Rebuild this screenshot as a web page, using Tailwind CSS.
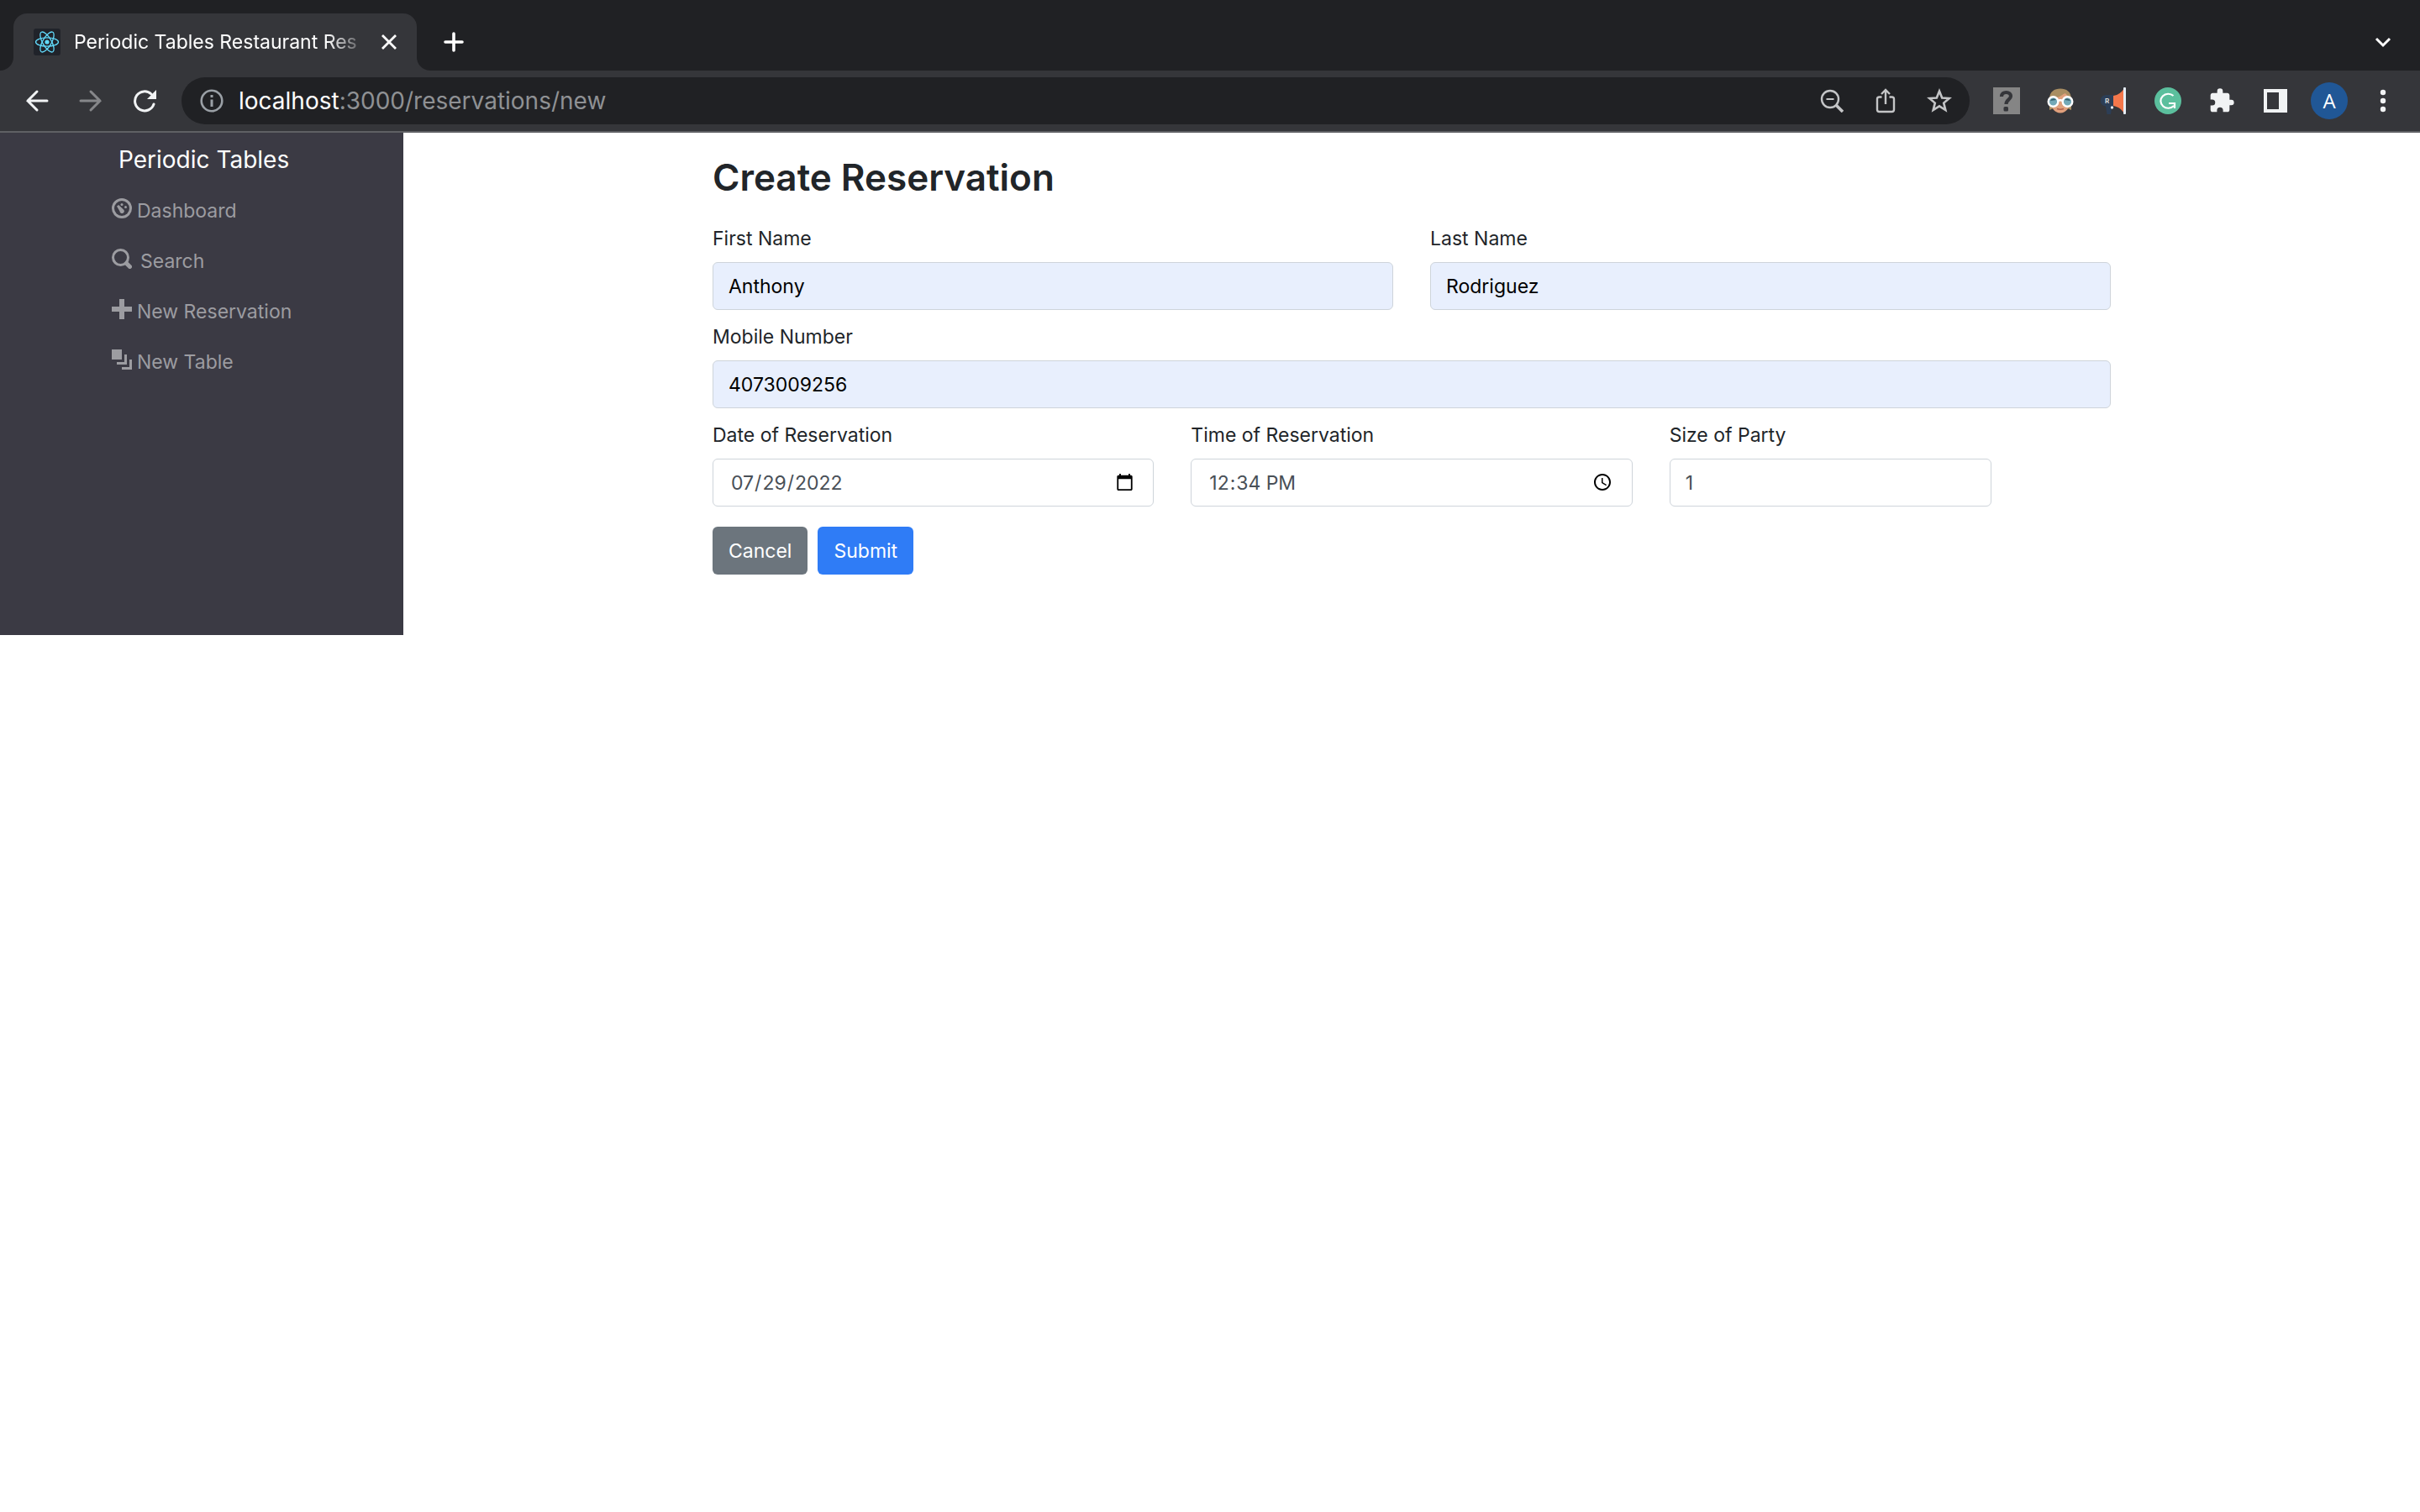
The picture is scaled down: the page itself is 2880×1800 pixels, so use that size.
<!DOCTYPE html>
<html lang="en-US">
<head>
<meta charset="utf-8">
<title>Periodic Tables Restaurant Reservations</title>
<script src="https://cdn.jsdelivr.net/npm/@tailwindcss/browser@4"></script>
</head>
<body class="min-h-screen bg-white font-['Inter',sans-serif] text-[23px] leading-9 text-[#212529]">
<header class="border-b-2 border-[#5f6064] bg-[#35363a]">
  <div class="flex h-[84px] items-end bg-[#202124]">
    <svg class="size-4 shrink-0 text-[#35363a]" viewBox="0 0 16 16" fill="currentColor"><path d="M16 0V16H0A16 16 0 0 0 16 0Z"/></svg>
    <div class="flex h-[68px] w-[480px] items-center rounded-t-2xl bg-[#35363a] pl-6 pr-5">
      <svg class="size-8 shrink-0" viewBox="0 0 32 32"><rect width="32" height="32" rx="3" fill="#20232a"/><g fill="none" stroke="#61dafb" stroke-width="1.3"><ellipse cx="16" cy="16" rx="13.5" ry="5.2"/><ellipse cx="16" cy="16" rx="13.5" ry="5.2" transform="rotate(60 16 16)"/><ellipse cx="16" cy="16" rx="13.5" ry="5.2" transform="rotate(120 16 16)"/></g><circle cx="16" cy="16" r="2.6" fill="#61dafb"/></svg>
      <span class="ml-4 w-[350px] shrink-0 overflow-hidden whitespace-nowrap text-white [mask-image:linear-gradient(to_right,black_86%,transparent)]">Periodic Tables Restaurant Res</span>
      <button class="ml-3 flex size-8 items-center justify-center text-white" aria-label="Close tab"><svg class="size-5" viewBox="0 0 20 20" fill="none" stroke="currentColor" stroke-width="2.8"><path d="M2 2L18 18M18 2L2 18"/></svg></button>
    </div>
    <svg class="size-4 shrink-0 text-[#35363a]" viewBox="0 0 16 16" fill="currentColor"><path d="M0 0V16H16A16 16 0 0 1 0 0Z"/></svg>
    <button class="ml-1 flex h-[68px] w-12 items-center justify-center text-white" aria-label="New tab"><svg class="size-6" viewBox="0 0 24 24" fill="none" stroke="currentColor" stroke-width="3.6" stroke-linecap="round"><path d="M12 2V22M2 12H22"/></svg></button>
    <button class="ml-auto mr-3 flex h-[68px] w-16 items-center justify-center text-white" aria-label="Search tabs"><svg class="size-6" viewBox="0 0 24 24" fill="none" stroke="currentColor" stroke-width="3"><path d="M4 8L12 16L20 8"/></svg></button>
  </div>
  <div class="flex h-[72px] items-center px-3">
    <button class="flex w-16 justify-center text-[#f1f3f4]" aria-label="Back"><svg class="size-7" viewBox="0 0 28 28" fill="none" stroke="currentColor" stroke-width="3" stroke-linecap="round"><path d="M26 14H3M14 3L3 14L14 25"/></svg></button>
    <button class="flex w-16 justify-center text-[#86878a]" aria-label="Forward"><svg class="size-7" viewBox="0 0 28 28" fill="none" stroke="currentColor" stroke-width="3" stroke-linecap="round"><path d="M2 14H25M14 3L25 14L14 25"/></svg></button>
    <button class="flex w-16 justify-center text-[#f1f3f4]" aria-label="Reload"><svg class="size-7" viewBox="0 0 28 28"><path d="M25 18A11.5 11.5 0 1 1 22 6" fill="none" stroke="currentColor" stroke-width="3" stroke-linecap="round"/><path d="M28 1V12H17Z" fill="currentColor"/></svg></button>
    <div class="mx-3 flex h-14 flex-1 items-center rounded-full bg-[#202124] pl-[22px]">
      <svg class="size-7 shrink-0" viewBox="0 0 28 28" fill="none" stroke="#9aa0a6" stroke-width="2.6"><circle cx="14" cy="14" r="12.3"/><path d="M14 12.5V21M14 7V10" stroke-width="3"/></svg>
      <div class="ml-[18px] flex-1 text-[28px] text-[#8f9194]"><span class="text-white">localhost</span>:3000/reservations/new</div>
      <button class="flex w-16 justify-center text-[#c4c5c7]" aria-label="Zoom"><svg class="size-7" viewBox="0 0 28 28" fill="none" stroke="currentColor"><circle cx="12" cy="12" r="10" stroke-width="2.4"/><path d="M7.5 12H16.5" stroke-width="2"/><path d="M19.500 19.500L27 27" stroke-width="3.600"/></svg></button>
      <button class="flex w-16 justify-center text-[#c4c5c7]" aria-label="Share"><svg class="h-[30px] w-6" viewBox="0 0 24 30" fill="none" stroke="currentColor" stroke-width="2.400"><path d="M7.500 10.500H4.500A2.500 2.500 0 0 0 2 13V25.500A2.500 2.500 0 0 0 4.500 28H19.500A2.500 2.500 0 0 0 22 25.500V13A2.500 2.500 0 0 0 19.500 10.500H16.500M12 19V3M7 7L12 2L17 7"/></svg></button>
      <button class="mr-1 flex w-16 justify-center text-[#c4c5c7]" aria-label="Bookmark"><svg class="size-[30px]" viewBox="0 0 30 30" fill="none" stroke="currentColor" stroke-width="2.600"><path d="M15 3.500L18.200 11.500L26.800 12L20.200 17.600L22.300 26L15 21.400L7.700 26L9.800 17.600L3.200 12L11.800 11.500Z"/></svg></button>
    </div>
    <button class="flex w-16 justify-center" aria-label="Unknown extension"><svg class="size-8" viewBox="0 0 32 32"><path d="M0 0H32V32H0Z" fill="#858585"/><path d="M10 11C10 7.500 12.500 6 15.500 6C19 6 21 8 21 10.600C21 14.500 15.500 14.500 15.500 20" fill="none" stroke="#35363a" stroke-width="4.200"/><rect x="12.500" y="23" width="5.500" height="5.500" rx="1.500" fill="#35363a"/></svg></button>
    <button class="flex w-16 justify-center" aria-label="Goggles extension"><svg class="size-8" viewBox="0 0 32 32"><path d="M3 27V14C3 5 9 1.500 16 1.500S29 5 29 14V27L24 25H8Z" fill="#a98e62"/><path d="M4 14L22 7L28 13C28 24 23 30.500 16 30.500S4 24 4 14Z" fill="#e0a07c"/><path d="M5 13C10 13 18 11 21 6L27 12V8L20 3H10L4 10Z" fill="#a98e62"/><path d="M12 25.500Q16 27 20 25.500" stroke="#b2604c" stroke-width="1.500" fill="none"/><g fill="#74a9b8" stroke="#fff" stroke-width="2.400"><circle cx="7.500" cy="17" r="5.800"/><circle cx="24.500" cy="17" r="5.800"/><path d="M13 16Q16 14.500 19 16" fill="none"/></g><path d="M4 16A4 4 0 0 1 11 15M21 15A4 4 0 0 1 28 16" fill="#345e6c"/></svg></button>
    <button class="flex w-16 justify-center" aria-label="Megaphone extension"><svg class="size-8" viewBox="0 0 32 32"><path d="M15 9H7A6.500 6.500 0 0 0 6 22.500L7.500 32H12L13.500 23H15Z" fill="#2c3e56"/><path d="M15 10C21 9 25 6 28 1V31C25 26 21 23 15 22Z" fill="#f4774b"/><rect x="27" width="3" height="32" rx="1" fill="#e6eef7"/><circle cx="13.500" cy="24" r="1.700" fill="#e6eef7"/><text x="5" y="19" font-family="Inter, sans-serif" font-size="8" font-weight="700" fill="#d8d8d8">R</text></svg></button>
    <button class="flex w-16 justify-center" aria-label="Grammar extension"><svg class="size-8" viewBox="0 0 32 32"><circle cx="16" cy="16" r="16" fill="#5bbf9d"/><path d="M22.500 10A9 8.500 0 1 0 23 22M17 19H24V25" fill="none" stroke="#fff" stroke-width="2.200"/></svg></button>
    <button class="flex w-16 justify-center text-[#f1f3f4]" aria-label="Extensions"><svg class="size-8" viewBox="0 0 24 24" fill="currentColor"><path d="M20.500 11H19V7c0-1.100-.9-2-2-2h-4V3.500a2.500 2.500 0 0 0-5 0V5H4c-1.100 0-2 .9-2 2v3.800h1.500a2.700 2.700 0 0 1 0 5.400H2V20c0 1.100.9 2 2 2h3.800v-1.500a2.700 2.700 0 0 1 5.400 0V22H17c1.100 0 2-.9 2-2v-4h1.500a2.500 2.500 0 0 0 0-5z"/></svg></button>
    <button class="flex w-16 justify-center text-[#f1f3f4]" aria-label="Side panel"><svg class="size-7" viewBox="0 0 28 28" fill="currentColor"><path fill-rule="evenodd" d="M0 0H28V28H0ZM4 4V24H18V4Z"/></svg></button>
    <button class="flex w-16 justify-center" aria-label="Profile"><span class="flex size-11 items-center justify-center rounded-full bg-[#205796] font-['Open_Sans',sans-serif] text-2xl text-white">A</span></button>
    <button class="flex w-16 justify-center text-[#f1f3f4]" aria-label="Menu"><svg class="h-7 w-2" viewBox="0 0 8 28" fill="currentColor"><circle cx="4" cy="4" r="3.200"/><circle cx="4" cy="14" r="3.200"/><circle cx="4" cy="24" r="3.200"/></svg></button>
  </div>
</header>
<div class="flex items-start">
  <nav class="flex h-[598px] w-1/6 justify-center bg-[#3b3a44] pt-2">
    <div class="w-[214px] whitespace-nowrap">
      <a href="#" class="block pl-2 text-[28px] leading-[48px] text-white">Periodic Tables</a>
      <ul class="mt-[7px] text-[#9c9ca1]">
        <li><a href="#" class="flex h-[60px] items-center gap-[6px]"><svg class="mb-[6px] size-6 shrink-0" viewBox="0 0 24 24" fill="currentColor"><circle cx="12" cy="12" r="10.500" fill="none" stroke="currentColor" stroke-width="3"/><circle cx="12" cy="7.500" r="1.500"/><circle cx="16.500" cy="10.500" r="1.500"/><path d="M6 9.500L8.200 8L14.500 14A2.700 2.700 0 1 1 9.500 15.500Z"/></svg>Dashboard</a></li>
        <li><a href="#" class="flex h-[60px] items-center gap-[10px]"><svg class="mb-[6px] size-6 shrink-0" viewBox="0 0 24 24" fill="none" stroke="currentColor"><circle cx="10.500" cy="10.500" r="9" stroke-width="3"/><path d="M17.500 17.500L21.500 21.500" stroke-width="5" stroke-linecap="round"/></svg>Search</a></li>
        <li><a href="#" class="flex h-[60px] items-center gap-[6px]"><svg class="mb-[6px] size-6 shrink-0" viewBox="0 0 24 24" fill="currentColor"><path d="M9 0H15V9H24V15H15V24H9V15H0V9H9Z"/></svg>New Reservation</a></li>
        <li><a href="#" class="flex h-[60px] items-center gap-[6px]"><svg class="mb-[6px] size-6 shrink-0" viewBox="0 0 24 24" fill="currentColor"><path d="M0 0H12V12H0ZM15 6H18V18H6V15H15ZM21 12H24V24H12V21H21Z"/></svg>New Table</a></li>
      </ul>
    </div>
  </nav>
  <main class="flex-1">
    <form class="mx-auto max-w-[1664px] pt-6">
      <h2 class="mb-[26px] text-[44px] font-semibold leading-[58px]">Create Reservation</h2>
      <div class="grid grid-cols-12 gap-x-11 gap-y-3">
        <div class="col-span-6"><label for="first" class="mb-[10px] block">First Name</label><input id="first" type="text" value="Anthony" class="block h-[57px] w-full rounded-md border border-[#ced4da] bg-[#e8effd] px-[18px] text-black"></div>
        <div class="col-span-6"><label for="last" class="mb-[10px] block">Last Name</label><input id="last" type="text" value="Rodriguez" class="block h-[57px] w-full rounded-md border border-[#ced4da] bg-[#e8effd] px-[18px] text-black"></div>
        <div class="col-span-12 pt-[2px]"><label for="mobile" class="mb-[10px] block">Mobile Number</label><input id="mobile" type="tel" value="4073009256" class="block h-[57px] w-full rounded-md border border-[#ced4da] bg-[#e8effd] px-[18px] text-black"></div>
        <div class="col-span-4 pt-[2px]"><label for="date" class="mb-[10px] block">Date of Reservation</label><input id="date" type="date" value="2022-07-29" class="block h-[57px] w-full rounded-md border border-[#ced4da] px-5 text-[#495057]"></div>
        <div class="col-span-4 pt-[2px]"><label for="time" class="mb-[10px] block">Time of Reservation</label><input id="time" type="time" value="12:34" class="block h-[57px] w-full rounded-md border border-[#ced4da] px-5 text-[#495057]"></div>
        <div class="col-span-3 pt-[2px]"><label for="size" class="mb-[10px] block">Size of Party</label><input id="size" type="number" value="1" class="block h-[57px] w-full rounded-md border border-[#ced4da] px-[18px] text-[#495057]"></div>
      </div>
      <div class="mt-6 flex gap-3">
        <button type="button" class="h-[57px] rounded-md bg-[#6c757d] px-[19px] text-white">Cancel</button>
        <button type="submit" class="h-[57px] rounded-md bg-[#2f7cf6] px-[19px] text-white">Submit</button>
      </div>
    </form>
  </main>
</div>
</body>
</html>
